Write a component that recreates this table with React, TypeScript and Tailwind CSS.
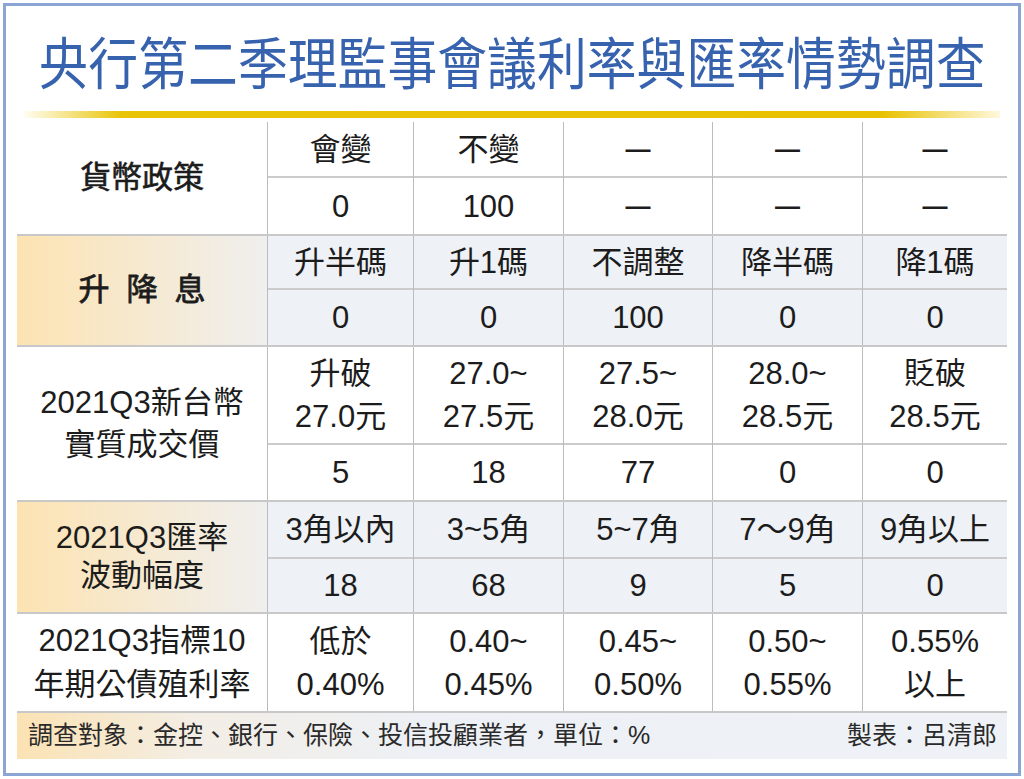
import React from "react";

type Cell = { top: string[]; bottom?: string[] };

type Group = {
  label: string[];
  labelClass: string;
  shaded: boolean;
  heights: string[];
  cells: Cell[];
};

const colWidths = ["w-[146px]", "w-[150px]", "w-[149px]", "w-[150px]", "w-[145px]"];

const DASH = "—";

const groups: Group[] = [
  {
    label: ["貨幣政策"],
    labelClass: "[-webkit-text-stroke:0.6px_#1c1c1c]",
    shaded: false,
    heights: ["h-[56px]", "h-[56px]"],
    cells: [
      { top: ["會變"], bottom: ["0"] },
      { top: ["不變"], bottom: ["100"] },
      { top: [DASH], bottom: [DASH] },
      { top: [DASH], bottom: [DASH] },
      { top: [DASH], bottom: [DASH] },
    ],
  },
  {
    label: ["升降息"],
    labelClass: "[-webkit-text-stroke:0.8px_#1c1c1c] tracking-[17px] pl-[17px]",
    shaded: true,
    heights: ["h-[54px]", "h-[55px]"],
    cells: [
      { top: ["升半碼"], bottom: ["0"] },
      { top: ["升1碼"], bottom: ["0"] },
      { top: ["不調整"], bottom: ["100"] },
      { top: ["降半碼"], bottom: ["0"] },
      { top: ["降1碼"], bottom: ["0"] },
    ],
  },
  {
    label: ["2021Q3新台幣", "實質成交價"],
    labelClass: "leading-[42px]",
    shaded: false,
    heights: ["h-[98px]", "h-[55px]"],
    cells: [
      { top: ["升破", "27.0元"], bottom: ["5"] },
      { top: ["27.0~", "27.5元"], bottom: ["18"] },
      { top: ["27.5~", "28.0元"], bottom: ["77"] },
      { top: ["28.0~", "28.5元"], bottom: ["0"] },
      { top: ["貶破", "28.5元"], bottom: ["0"] },
    ],
  },
  {
    label: ["2021Q3匯率", "波動幅度"],
    labelClass: "leading-[38px]",
    shaded: true,
    heights: ["h-[57px]", "h-[53px]"],
    cells: [
      { top: ["3角以內"], bottom: ["18"] },
      { top: ["3~5角"], bottom: ["68"] },
      { top: ["5~7角"], bottom: ["9"] },
      { top: ["7～9角"], bottom: ["5"] },
      { top: ["9角以上"], bottom: ["0"] },
    ],
  },
  {
    label: ["2021Q3指標10", "年期公債殖利率"],
    labelClass: "leading-[44px]",
    shaded: false,
    heights: ["h-[97px]"],
    cells: [
      { top: ["低於", "0.40%"] },
      { top: ["0.40~", "0.45%"] },
      { top: ["0.45~", "0.50%"] },
      { top: ["0.50~", "0.55%"] },
      { top: ["0.55%", "以上"] },
    ],
  },
];

const CellText = ({ lines }: { lines: string[] }) => (
  <div className="leading-[43px]">
    {lines.map((line, i) =>
      line === DASH ? (
        <div key={i} className="text-[25px] font-bold leading-[43px]">
          {line}
        </div>
      ) : (
        <div key={i}>{line}</div>
      )
    )}
  </div>
);

export default function App() {
  return (
    <div className="w-[1024px] h-[779px] bg-white pt-[3px] px-[3px] font-['Liberation_Sans','Noto_Sans_CJK_TC',sans-serif] text-[#1c1c1c]">
      <div className="h-[773px] border-[3px] border-[#8ba5d5] flex flex-col">
        {/* Title */}
        <div className="h-[105px] pt-[2px] flex items-center justify-center overflow-hidden">
          <h1 className="inline-block shrink-0 whitespace-nowrap scale-x-[0.89] font-['Noto_Sans_CJK_TC',sans-serif] font-normal text-[56px] leading-[64px] text-[#3662ae]">
            央行第二季理監事會議利率與匯率情勢調查
          </h1>
        </div>

        {/* Gold rule */}
        <div className="ml-[18px] w-[976px] h-[7px] bg-[linear-gradient(90deg,#fffdf2_0%,#e9c406_10%,#e8c200_88%,#fff8dc_100%)]" />

        {/* Table */}
        <div className="ml-[11px] w-[990px] mt-[4px] text-[31px]">
          {groups.map((g, gi) => (
            <div key={gi} className="flex border-b-2 border-[#c8c8c8]">
              <div
                className={`w-[250px] flex flex-col items-center justify-center text-center ${
                  g.shaded ? "bg-[linear-gradient(90deg,#fde3b2,#efefee)]" : "bg-white"
                } ${g.labelClass}`}
              >
                {g.label.map((l, i) => (
                  <div key={i}>{l}</div>
                ))}
              </div>
              {g.cells.map((c, ci) => (
                <div
                  key={ci}
                  className={`${colWidths[ci]} flex flex-col border-l border-[#bcbcbc] text-center ${
                    g.shaded ? "bg-[#eef1f5]" : "bg-white"
                  }`}
                >
                  <div
                    className={`${g.heights[0]} flex items-center justify-center ${
                      c.bottom ? "border-b-2 border-[#cbcbcb]" : ""
                    }`}
                  >
                    <CellText lines={c.top} />
                  </div>
                  {c.bottom && (
                    <div className={`${g.heights[1]} flex items-center justify-center`}>
                      <CellText lines={c.bottom} />
                    </div>
                  )}
                </div>
              ))}
            </div>
          ))}

          {/* Footer */}
          <div className="h-[46px] flex items-center justify-between pl-[11px] pr-[10px] text-[25px] text-[#2a2a2a] bg-[linear-gradient(90deg,#fbe2b3_0%,#f3eee5_18%,#edf0f4_40%,#eef1f5_100%)]">
            <span>調查對象：金控、銀行、保險、投信投顧業者，單位：%</span>
            <span>製表：呂清郎</span>
          </div>
        </div>
      </div>
    </div>
  );
}
